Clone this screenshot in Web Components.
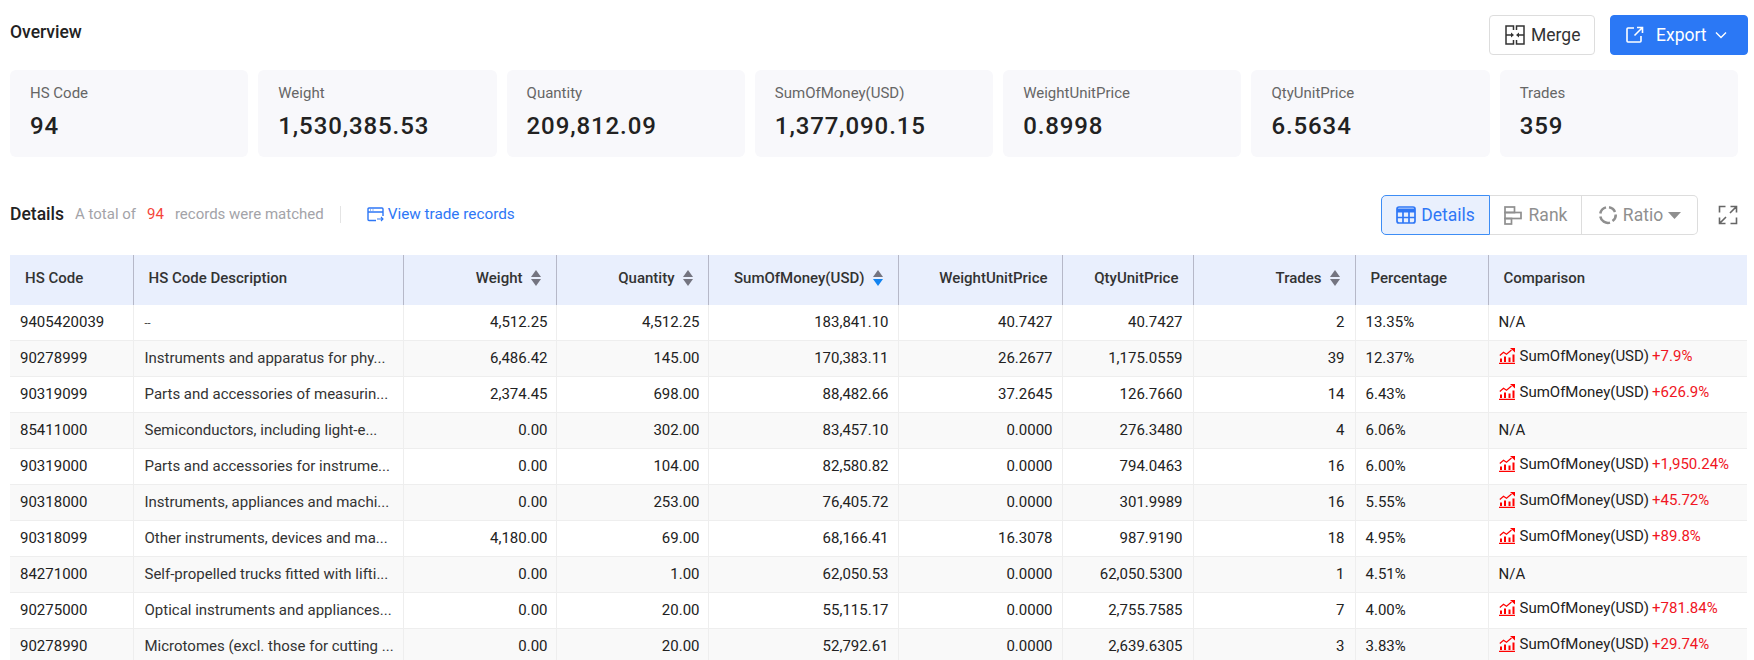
<!DOCTYPE html>
<html>
<head>
<meta charset="utf-8">
<title>Overview</title>
<style>
  html, body { margin: 0; height: 660px; overflow: hidden; background: #fff; }
  body { font-family: Roboto, "Liberation Sans", sans-serif; color: #222; }
</style>
</head>
<body>
<trade-page></trade-page>

<script>
const ICONS = {
  merge: `<svg width="20" height="20" viewBox="0 0 20 20" fill="none" stroke="#333" stroke-width="1.500"><path d="M8.500 5V1H1v18h7.500v-4M1 10h6M11.500 5V1H19v18h-7.500v-4M19 10h-6"/><path d="M6 7.500l3 2.500-3 2.500zM14 7.500l-3 2.500 3 2.500z" fill="#333" stroke="none"/></svg>`,
  exportIcon: `<svg width="18" height="18" viewBox="0 0 18 18" fill="none" stroke="#fff" stroke-width="1.600"><path d="M8 2H2a1 1 0 0 0-1 1v12a1 1 0 0 0 1 1h12a1 1 0 0 0 1-1v-5"/><path d="M11 1.500h5.500V7M16.500 1.500L8.500 9.500"/></svg>`,
  chevron: `<svg width="12" height="8" viewBox="0 0 12 8" fill="none" stroke="#fff" stroke-width="1.400"><path d="M1 1.500l5 5 5-5"/></svg>`,
  records: `<svg width="17" height="15" viewBox="0 0 17 15" fill="none" stroke="#2e77f6" stroke-width="1.400"><path d="M9 13.500H2a1 1 0 0 1-1-1V2a1 1 0 0 1 1-1h13a1 1 0 0 1 1 1v7M1 5h15"/><path d="M3 3h1M5.500 3h1" stroke-width="1.200"/><path d="M10 12h6M14 10l2 2-2 2" stroke-width="1.100"/></svg>`,
  table: `<svg width="20" height="18" viewBox="0 0 20 18" fill="none" stroke="#2e77f6" stroke-width="1.700"><rect x="1" y="1" width="18" height="16" rx="2"/><path d="M1 4.500h18" stroke-width="4"/><path d="M1 11.500h18M7 6v11M13 6v11"/></svg>`,
  rank: `<svg width="18" height="19" viewBox="0 0 18 19" fill="none" stroke="#8f8f8f" stroke-width="1.700"><rect x="1" y="1" width="9.500" height="5.500"/><rect x="1" y="6.500" width="16" height="6"/><rect x="1" y="12.500" width="6.500" height="5.500"/></svg>`,
  ratio: `<svg width="20" height="20" viewBox="0 0 20 20" fill="none" stroke="#8f8f8f" stroke-width="2.500"><path d="M11 2.300a7.800 7.800 0 0 1 6 4.700M17.800 9.500a7.800 7.800 0 0 1-3.300 6.500M12 17.600A7.800 7.800 0 0 1 2.300 11.500M2.300 8.500A7.800 7.800 0 0 1 8 2.400"/></svg>`,
  caret: `<svg width="13" height="7" viewBox="0 0 13 7"><path d="M0 0h13L6.500 7z" fill="#8f8f8f"/></svg>`,
  expand: `<svg width="20" height="20" viewBox="0 0 20 20" fill="none" stroke="#666" stroke-width="1.600"><path d="M7.500 1.500H1.500V7.500M12.500 1.500h6v6M18.500 1.500L12 8M1.500 12.500v6h6M18.500 12.500v6h-6M1.500 18.500L8 12"/></svg>`,
  trend: `<svg width="16" height="16" viewBox="0 0 16 16" fill="#f00"><path d="M0 14.700h16V16H0zM1 10.500h2v3.500H1zM5 8.500h2v5.500H5zM9.500 9.500h2v4.500h-2zM13.500 6.500h2V14h-2z"/><path d="M.8 7.500L4.500 4.300l3 2L12.500 2" fill="none" stroke="#f00" stroke-width="1.200"/><path d="M11 0h5v4.500z"/></svg>`
};

class ActionButton extends HTMLElement {
  constructor() {
    super();
    this.attachShadow({ mode: "open" });
    this.shadowRoot.innerHTML = `
      <style>
        :host { display: inline-flex; align-items: center; box-sizing: border-box; padding-left: 15px;
          height: 40px; border: 1px solid #ddd; border-radius: 4px; color: #333; font-size: 17.500px; background: #fff; }
        :host([primary]) { background: #2b78f5; border-color: #2b78f5; color: #fff; }
      </style>
      <slot></slot>`;
  }
}
customElements.define("action-button", ActionButton);

class StatCard extends HTMLElement {
  constructor() {
    super();
    this.attachShadow({ mode: "open" });
    this.shadowRoot.innerHTML = `
      <style>
        :host { display: block; box-sizing: border-box; height: 87px; padding: 14px 20px; background: #f8f8fb; border-radius: 6px; }
        .label { font-size: 15px; line-height: 18px; color: #666; }
        .value { margin-top: 9px; font-size: 24px; line-height: 30px; font-weight: 500; color: #222; letter-spacing: .9px; }
      </style>
      <div class="label"><slot name="label"></slot></div>
      <div class="value"><slot name="value"></slot></div>`;
  }
}
customElements.define("stat-card", StatCard);

class SegTab extends HTMLElement {
  constructor() {
    super();
    this.attachShadow({ mode: "open" });
    this.shadowRoot.innerHTML = `
      <style>
        :host { display: flex; align-items: center; justify-content: center; gap: 5px; box-sizing: border-box;
          height: 40px; font-size: 17.500px; color: #8f8f8f; border: 1px solid #ddd; border-left: 0; }
        :host(:first-child) { border-left: 1px solid #ddd; border-radius: 5px 0 0 5px; }
        :host(:last-child) { border-radius: 0 5px 5px 0; }
        :host([active]) { background: #e9f0fd; color: #2e77f6; border: 1px solid #3d8df5; }
      </style>
      <slot></slot>`;
  }
}
customElements.define("seg-tab", SegTab);

class SortCaret extends HTMLElement {
  constructor() {
    super();
    this.attachShadow({ mode: "open" });
    this.shadowRoot.innerHTML = `
      <style>
        :host { display: inline-flex; flex-direction: column; gap: 2px; margin-left: 8px; flex: none; }
        i { display: block; width: 0; height: 0; border-left: 5px solid transparent; border-right: 5px solid transparent; }
        .up { border-bottom: 7px solid #747480; }
        .down { border-top: 7px solid #747480; }
        :host([desc]) .down { border-top-color: #1283f0; }
      </style>
      <i class="up"></i><i class="down"></i>`;
  }
}
customElements.define("sort-caret", SortCaret);

const COLUMNS = [
  { title: "HS Code", width: 123, cell: "l" },
  { title: "HS Code Description", width: 270, cell: "l" },
  { title: "Weight", width: 153, cell: "r", sort: true },
  { title: "Quantity", width: 152, cell: "r", sort: true },
  { title: "SumOfMoney(USD)", width: 190, cell: "r", sort: "desc" },
  { title: "WeightUnitPrice", width: 164, cell: "r" },
  { title: "QtyUnitPrice", width: 131, cell: "r" },
  { title: "Trades", width: 162, cell: "r", sort: true },
  { title: "Percentage", width: 133, cell: "l" },
  { title: "Comparison", width: 259, cell: "l" }
];

const ROWS = [
  ["9405420039", `<span class="dash">--</span>`, "4,512.25", "4,512.25", "183,841.10", "40.7427", "40.7427", "2", "13.35%", null],
  ["90278999", "Instruments and apparatus for phy...", "6,486.42", "145.00", "170,383.11", "26.2677", "1,175.0559", "39", "12.37%", "+7.9%"],
  ["90319099", "Parts and accessories of measurin...", "2,374.45", "698.00", "88,482.66", "37.2645", "126.7660", "14", "6.43%", "+626.9%"],
  ["85411000", "Semiconductors, including light-e...", "0.00", "302.00", "83,457.10", "0.0000", "276.3480", "4", "6.06%", null],
  ["90319000", "Parts and accessories for instrume...", "0.00", "104.00", "82,580.82", "0.0000", "794.0463", "16", "6.00%", "+1,950.24%"],
  ["90318000", "Instruments, appliances and machi...", "0.00", "253.00", "76,405.72", "0.0000", "301.9989", "16", "5.55%", "+45.72%"],
  ["90318099", "Other instruments, devices and ma...", "4,180.00", "69.00", "68,166.41", "16.3078", "987.9190", "18", "4.95%", "+89.8%"],
  ["84271000", "Self-propelled trucks fitted with lifti...", "0.00", "1.00", "62,050.53", "0.0000", "62,050.5300", "1", "4.51%", null],
  ["90275000", "Optical instruments and appliances...", "0.00", "20.00", "55,115.17", "0.0000", "2,755.7585", "7", "4.00%", "+781.84%"],
  ["90278990", "Microtomes (excl. those for cutting ...", "0.00", "20.00", "52,792.61", "0.0000", "2,639.6305", "3", "3.83%", "+29.74%"]
];

class TradeTable extends HTMLElement {
  constructor() {
    super();
    this.attachShadow({ mode: "open" });
  }

  connectedCallback() {
    const head = COLUMNS.map((c) => {
      const caret = c.sort ? `<sort-caret ${c.sort === "desc" ? "desc" : ""}></sort-caret>` : "";
      return `<th class="${c.cell}"><span class="h">${c.title}${caret}</span></th>`;
    }).join("");
    const body = ROWS.map((r) => {
      const cells = r.map((v, i) => {
        if (i === 9) {
          const inner = v
            ? `<span class="cmp">${ICONS.trend}<span>SumOfMoney(USD)</span><b>${v}</b></span>`
            : "N/A";
          return `<td class="l">${inner}</td>`;
        }
        return `<td class="${COLUMNS[i].cell}">${v}</td>`;
      }).join("");
      return `<tr>${cells}</tr>`;
    }).join("");
    this.shadowRoot.innerHTML = `
      <style>
        :host { display: block; font-size: 15px; }
        table { border-collapse: collapse; table-layout: fixed; width: 1737px; }
        th { height: 50px; padding: 0 15px 5px 15px; background: #e9effd; font-size: 15px; font-weight: 500; color: #333;
          border-left: 1px solid #b6b8c8; white-space: nowrap; box-sizing: border-box; }
        th:first-child, td:first-child { border-left: 0; }
        th:nth-child(6), th:nth-child(7) { padding-right: 14px; }
        .h { display: inline-flex; align-items: center; }
        td { height: 36px; padding: 0 10px 1px; box-sizing: border-box; color: #222; border-left: 1px solid #eee;
          border-bottom: 1px solid #eee; white-space: nowrap; }
        tr:first-child td { height: 35px; }
        td:nth-child(2) { padding-left: 11px; color: #333; }
        td:nth-child(3), td:nth-child(4) { padding-right: 8px; }
        td:nth-child(5), td:nth-child(6) { padding-right: 9px; }
        .dash { font-size: 11px; }
        tbody tr:nth-child(even) td { background: #f9f9f9; }
        .l { text-align: left; }
        .r { text-align: right; }
        .cmp { display: inline-flex; align-items: center; gap: 2px; }
        .cmp svg { margin-right: 3px; }
        .cmp b { font-weight: 400; color: #f01523; margin-left: 1px; }
      </style>
      <table>
        <colgroup>${COLUMNS.map((c) => `<col style="width:${c.width}px">`).join("")}</colgroup>
        <thead><tr>${head}</tr></thead>
        <tbody>${body}</tbody>
      </table>`;
  }
}
customElements.define("trade-table", TradeTable);

class TradePage extends HTMLElement {
  constructor() {
    super();
    this.attachShadow({ mode: "open" });
  }

  connectedCallback() {
    const stats = [
      ["HS Code", "94"], ["Weight", "1,530,385.53"], ["Quantity", "209,812.09"], ["SumOfMoney(USD)", "1,377,090.15"],
      ["WeightUnitPrice", "0.8998"], ["QtyUnitPrice", "6.5634"], ["Trades", "359"]
    ];
    this.shadowRoot.innerHTML = `
      <style>
        :host { display: block; padding: 15px 6px 0 10px; }
        .top { display: flex; justify-content: space-between; height: 40px; }
        .title { font-size: 17.500px; font-weight: 500; line-height: 34px; color: #222; }
        .actions { display: flex; gap: 15px; }
        .merge { width: 106px; gap: 6px; }
        .export { width: 138px; }
        .export svg:first-child { margin: 0 12px 0 0; }
        .export svg:last-child { margin-left: 8px; }
        .stats { display: grid; grid-template-columns: repeat(7, 1fr); gap: 10px; margin: 15px 10px 38px 0; }
        .bar { display: flex; align-items: center; height: 40px; margin-bottom: 20px; }
        .info { display: flex; align-items: center; padding-bottom: 2px; }
        .count { margin-left: 11px; font-size: 15px; color: #a3a3a8; }
        .count em { font-style: normal; color: #f5453a; margin: 0 11px; }
        .sep { width: 1px; height: 17px; background: #e4e4e4; margin: 0 26px 0 16px; }
        .link { display: flex; align-items: center; gap: 4px; font-size: 15.300px; color: #2e77f6; }
        .seg { margin-left: auto; display: flex; }
        .expand { display: flex; margin: 0 10px 0 20px; }
      </style>
      <div class="top">
        <div class="title">Overview</div>
        <div class="actions">
          <action-button class="merge">${ICONS.merge}<span>Merge</span></action-button>
          <action-button class="export" primary>${ICONS.exportIcon}<span>Export</span>${ICONS.chevron}</action-button>
        </div>
      </div>
      <div class="stats">
        ${stats.map(([l, v]) => `<stat-card><span slot="label">${l}</span><span slot="value">${v}</span></stat-card>`).join("")}
      </div>
      <div class="bar">
        <div class="info">
          <div class="title">Details</div>
          <div class="count">A total of<em>94</em>records were matched</div>
          <div class="sep"></div>
          <div class="link">${ICONS.records}<span>View trade records</span></div>
        </div>
        <div class="seg">
          <seg-tab active style="width:109px">${ICONS.table}<span>Details</span></seg-tab>
          <seg-tab style="width:92px; gap:7px">${ICONS.rank}<span>Rank</span></seg-tab>
          <seg-tab style="width:116px">${ICONS.ratio}<span>Ratio</span>${ICONS.caret}</seg-tab>
        </div>
        <div class="expand">${ICONS.expand}</div>
      </div>
      <trade-table></trade-table>`;
  }
}
customElements.define("trade-page", TradePage);
</script>
</body>
</html>
